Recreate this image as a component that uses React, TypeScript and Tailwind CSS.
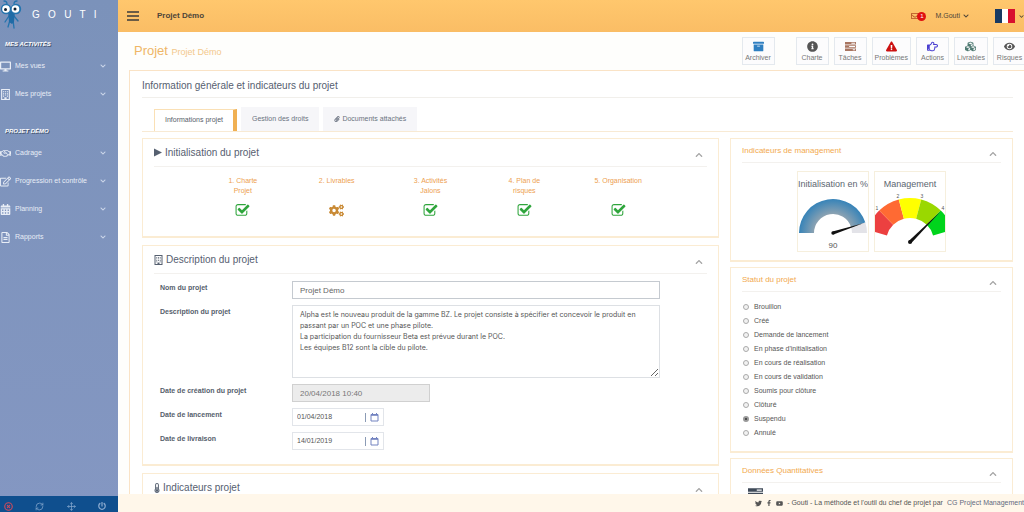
import React, { useState } from 'react';
import {
  FaArchive,
  FaCalendarAlt,
  FaChevronDown,
  FaChevronUp,
  FaCogs,
  FaCubes,
  FaDesktop,
  FaExclamationTriangle,
  FaEye,
  FaFacebookF,
  FaInfoCircle,
  FaPaperclip,
  FaPowerOff,
  FaRegEdit,
  FaRegEnvelope,
  FaRegFileAlt,
  FaRegHandPointRight,
  FaRegHandshake,
  FaThermometerHalf,
  FaTwitter,
  FaYoutube,
} from 'react-icons/fa';
import { CircleX, Move, RefreshCw } from 'lucide-react';

interface IconProps {
  className?: string;
}

function BuildingIcon({ className }: IconProps) {
  return (
    <svg viewBox="0 0 18 20" className={className} fill="currentColor" aria-hidden="true">
      <path d="M1 0h16v20H1zM3 2v16h4v-3h4v3h4V2z" fillRule="evenodd" />
      <path
        d="M4.5 4h2v1.6h-2zM8 4h2v1.6h-2zM11.5 4h2v1.6h-2zM4.5 7h2v1.6h-2zM8 7h2v1.6H8zM11.5 7h2v1.6h-2zM4.5 10h2v1.6h-2zM8 10h2v1.6H8zM11.5 10h2v1.6h-2zM4.5 13h2v1.6h-2zM11.5 13h2v1.6h-2z"
      />
    </svg>
  );
}

function TasksIcon({ className }: IconProps) {
  return (
    <svg viewBox="0 0 24 20" className={className} fill="currentColor" aria-hidden="true">
      <path
        fillRule="evenodd"
        d="M0 0h24v5.5H0zM14 1.8v2h8v-2zM0 7.2h24v5.5H0zM9 9v2h13V9zM0 14.5h24V20H0zM17 16.2v2h5v-2z"
      />
    </svg>
  );
}

function PlayIcon({ className }: IconProps) {
  return (
    <svg viewBox="0 0 8 8" className={className} fill="currentColor" aria-hidden="true">
      <path d="M0 0l8 4-8 4z" />
    </svg>
  );
}

function CalendarIcon({ className }: IconProps) {
  return (
    <svg viewBox="0 0 9 9" className={className} fill="none" stroke="currentColor" aria-hidden="true">
      <path d="M1 1.5h7v6.5H1z" />
      <path d="M1 2h7" strokeWidth="1.6" />
      <path d="M2.5 0v1M6.5 0v1" />
    </svg>
  );
}

const activities = [
  { label: 'Mes vues', icon: FaDesktop },
  { label: 'Mes projets', icon: BuildingIcon },
];

const projectMenu = [
  { label: 'Cadrage', icon: FaRegHandshake },
  { label: 'Progression et contrôle', icon: FaRegEdit },
  { label: 'Planning', icon: FaCalendarAlt },
  { label: 'Rapports', icon: FaRegFileAlt },
];

const actions = [
  { label: 'Charte', icon: FaInfoCircle, color: 'text-[#555]' },
  { label: 'Tâches', icon: TasksIcon, color: 'text-[#a87560]' },
  { label: 'Problèmes', icon: FaExclamationTriangle, color: 'text-[#cc1111]' },
  { label: 'Actions', icon: FaRegHandPointRight, color: 'text-[#4a3fd0]' },
  { label: 'Livrables', icon: FaCubes, color: 'text-[#4f7a72]' },
  { label: 'Risques', icon: FaEye, color: 'text-[#555]' },
];

const steps = [
  { lines: ['1. Charte', 'Projet'], done: true },
  { lines: ['2. Livrables'], done: false },
  { lines: ['3. Activités', 'Jalons'], done: true },
  { lines: ['4. Plan de', 'risques'], done: true },
  { lines: ['5. Organisation'], done: true },
];

const statuses = [
  'Brouillon',
  'Créé',
  'Demande de lancement',
  "En phase d'initialisation",
  'En cours de réalisation',
  'En cours de validation',
  'Soumis pour clôture',
  'Clôturé',
  'Suspendu',
  'Annulé',
];

const description = `Alpha est le nouveau produit de la gamme BZ. Le projet consiste à spécifier et concevoir le produit en passant par un POC et une phase pilote.
La participation du fournisseur Beta est prévue durant le POC.
Les équipes B12 sont la cible du pilote.`;

function Mascot() {
  return (
    <svg viewBox="0 0 22 30" className="h-[30px] w-[22px] shrink-0" aria-hidden="true">
      <g stroke="#2474ae" strokeWidth="1.3" fill="none" strokeLinecap="round">
        <path d="M7 4C7 2 6 1 4 1M14 4c0-2 1-3 3-3" />
        <path d="M9 16l-4 6M14 16l4 5M10 20l-2 7M13 20l1 8" />
      </g>
      <path d="M8 11h7l-1 11-2 2-3-2z" fill="#1f6ba6" />
      <circle cx="6" cy="9" r="5.2" fill="#2474ae" />
      <circle cx="16" cy="9" r="5.2" fill="#2474ae" />
      <circle cx="6" cy="9" r="3.8" fill="#fff" />
      <circle cx="15.5" cy="9" r="3.8" fill="#fff" />
      <circle cx="5.5" cy="9.5" r="1.5" fill="#123" />
      <circle cx="15" cy="9" r="1.5" fill="#123" />
    </svg>
  );
}

function CheckIcon() {
  return (
    <svg viewBox="0 0 1792 1792" className="h-[15px] w-[15px]" fill="#2fa53c" aria-hidden="true">
      <path d="M1472 930v318q0 119-84.5 203.5t-203.5 84.5h-832q-119 0-203.5-84.5t-84.5-203.5v-832q0-119 84.5-203.5t203.5-84.5h832q63 0 117 25 15 7 18 23 3 17-9 29l-49 49q-10 10-23 10-3 0-9-2-23-6-45-6h-832q-66 0-113 47t-47 113v832q0 66 47 113t113 47h832q66 0 113-47t47-113v-254q0-13 9-22l64-64q10-10 23-10 6 0 12 3 20 8 20 29zm231-489l-814 814q-24 24-57 24t-57-24l-430-430q-24-24-24-57t24-57l110-110q24-24 57-24t57 24l263 263 647-647q24-24 57-24t57 24l110 110q24 24 24 57t-24 57z" />
    </svg>
  );
}

// ring segment between two angles (degrees, counter-clockwise from the right)
function arc(cx: number, cy: number, r1: number, r2: number, from: number, to: number) {
  const pt = (r: number, a: number) => {
    const rad = (a * Math.PI) / 180;
    return `${(cx + r * Math.cos(rad)).toFixed(2)} ${(cy - r * Math.sin(rad)).toFixed(2)}`;
  };
  return `M${pt(r2, from)}A${r2} ${r2} 0 0 1 ${pt(r2, to)}L${pt(r1, to)}A${r1} ${r1} 0 0 0 ${pt(r1, from)}Z`;
}

function ProgressGauge() {
  return (
    <svg viewBox="0 0 70 60" className="block w-full" role="img" aria-label="90">
      <defs>
        <radialGradient id="blueRing" gradientUnits="userSpaceOnUse" cx="35" cy="42" r="34">
          <stop offset="0.55" stopColor="#8ea3b2" />
          <stop offset="1" stopColor="#3683b8" />
        </radialGradient>
      </defs>
      <path d={arc(35, 42, 19, 34, 180, 18)} fill="url(#blueRing)" />
      <path d={arc(35, 42, 19, 34, 18, 0)} fill="#e3e3e8" />
      <path d="M34.6 40.6L66 32L35.4 43.6Z" fill="#111" />
      <circle cx="35" cy="42" r="1.7" fill="#111" />
      <text x="35" y="57" textAnchor="middle" fontSize="8" fill="#555">90</text>
    </svg>
  );
}

function ManagementGauge() {
  const colors = ['#ec4040', '#ff6a33', '#ffff00', '#9ad800', '#00d41c'];
  return (
    <svg viewBox="0 0 70 60" className="block w-full" role="img" aria-label="Management">
      {colors.map((c, i) => (
        <path key={c} d={arc(35, 51, 24, 44, 164 - i * 29.6, 164 - (i + 1) * 29.6)} fill={c} />
      ))}
      <path d="M34 49.8L66 20L36.2 52.2Z" fill="#111" />
      <circle cx="35" cy="51" r="2" fill="#111" />
      <g fontSize="5" fill="#555" textAnchor="middle">
        <text x="2" y="19">1</text>
        <text x="23" y="7">2</text>
        <text x="47" y="7">3</text>
        <text x="68" y="19">4</text>
      </g>
    </svg>
  );
}

function NavGroup({ title, items }: { title: string; items: typeof activities }) {
  return (
    <section>
      <h3 className="pl-[5px] text-[6px] leading-[8px] font-bold italic text-white [text-shadow:1px_1px_0_#44536f]">
        {title}
      </h3>
      <ul className="pt-1">
        {items.map(({ label, icon: Icon }) => (
          <li key={label}>
            <a href="#" className="flex h-7 items-center pr-3 text-[7px] text-[#e8edf6]">
              <Icon className="h-[11px] w-[11px] shrink-0" />
              <span className="grow pl-1 whitespace-nowrap">{label}</span>
              <FaChevronDown className="h-[6px] w-[6px] shrink-0 text-[#cdd7ea]" />
            </a>
          </li>
        ))}
      </ul>
    </section>
  );
}

function Sidebar() {
  return (
    <aside className="flex w-[118px] shrink-0 flex-col bg-linear-to-b from-[#7b92ba] to-[#8497c2]">
      <div className="flex h-10 items-start">
        <Mascot />
        <span className="pt-2 pl-[10px] text-[10px] leading-[14px] whitespace-pre text-white">G   O   U   T   I</span>
      </div>
      <nav className="flex grow flex-col gap-[19px]">
        <NavGroup title="MES ACTIVITÉS" items={activities} />
        <NavGroup title="PROJET DÉMO" items={projectMenu} />
      </nav>
      <div className="flex h-4 items-center justify-between bg-[#0f4f8e] pt-1 pr-3 pl-1 text-[#86a7cd]">
        <button aria-label="Fermer" className="text-[#cf4a5c]"><CircleX size={9} strokeWidth={3} /></button>
        <button aria-label="Actualiser"><RefreshCw size={9} /></button>
        <button aria-label="Déplacer"><Move size={9} /></button>
        <button aria-label="Déconnexion"><FaPowerOff size={8} /></button>
      </div>
    </aside>
  );
}

function TopBar() {
  return (
    <header className="flex h-8 shrink-0 items-center bg-linear-to-b from-[#ffc76d] to-[#fabd65] pl-[9px] text-[#4d4538]">
      <button aria-label="Menu" className="flex w-3 flex-col gap-[2px]">
        <span className="h-[2px] bg-[#6b5c46]" />
        <span className="h-[2px] bg-[#6b5c46]" />
        <span className="h-[2px] bg-[#6b5c46]" />
      </button>
      <strong className="grow pl-[18px] text-[8px]">Projet Démo</strong>
      <button aria-label="Messages" className="flex items-center">
        <FaRegEnvelope className="h-[8px] w-[8px] text-[#b04d20]" />
        <span className="-ml-[2px] h-[9px] w-[9px] rounded-full bg-[#e01010] text-[6px] leading-[9px] text-white">1</span>
      </button>
      <button className="ml-[9px] flex items-center gap-[3px] text-[7px]">
        M.Gouti <FaChevronDown size={6} />
      </button>
      <button aria-label="Français" className="ml-[26px] flex items-center gap-1">
        <span className="flex h-[14px] w-5">
          <span className="grow bg-[#173a63]" />
          <span className="grow bg-white" />
          <span className="grow bg-[#d8102e]" />
        </span>
        <FaChevronDown size={5} />
      </button>
    </header>
  );
}

function ActionButton({ label, icon: Icon, color }: (typeof actions)[number]) {
  return (
    <button className="flex h-7 min-w-[33px] flex-col items-center justify-center gap-[2px] border border-[#e4e9ee] bg-[#fcfcfd] px-[2px] text-[7px] leading-[8px] text-[#777]">
      <Icon className={`h-[11px] w-[11px] ${color}`} />
      {label}
    </button>
  );
}

interface PanelProps {
  title: string;
  icon?: React.ReactNode;
  side?: boolean;
  children?: React.ReactNode;
}

function Panel({ title, icon, side, children }: PanelProps) {
  return (
    <section className="border border-b-2 border-[#fbecd3] bg-white">
      <div
        className={`mx-[11px] flex justify-between border-b border-[#f3f1ee] ${side ? 'h-6' : 'h-7'}`}
      >
        {side ? (
          <h3 className="pt-[6px] text-[8px] leading-[12px] text-[#f2a94e]">{title}</h3>
        ) : (
          <h2 className="flex items-center gap-[3px] text-[10px] text-[#566070]">
            {icon}
            {title}
          </h2>
        )}
        <button aria-label="Réduire" className={`pr-1 text-[#a5a5a5] ${side ? 'pt-[6px]' : 'pt-1'}`}>
          <FaChevronUp className="h-[8px] w-[8px]" />
        </button>
      </div>
      {children}
    </section>
  );
}

function Field({ id, label, children }: { id: string; label: string; children: React.ReactNode }) {
  return (
    <div className="grid grid-cols-4">
      <label htmlFor={id} className="pt-[2px] text-[7px] leading-[10px] font-bold text-[#56606c]">
        {label}
      </label>
      <div className="col-span-3 pr-7">{children}</div>
    </div>
  );
}

function DateInput({ id, value }: { id: string; value: string }) {
  return (
    <div className="flex h-[18px] w-[92px] items-center border border-[#e2e5ea] pr-1">
      <input id={id} defaultValue={value} className="w-0 grow pl-1 text-[7px] text-[#555] outline-none" />
      <button aria-label="Choisir une date" className="border-l border-[#8b9bb5] pl-1 text-[#7283c0]">
        <CalendarIcon className="h-[9px] w-[9px]" />
      </button>
    </div>
  );
}

function ProjectForm() {
  return (
    <form className="flex flex-col gap-[6px] pt-[7px] pr-[30px] pb-[14px] pl-[17px]">
      <Field id="name" label="Nom du projet">
        <input
          id="name"
          defaultValue="Projet Démo"
          className="block h-[18px] w-full border border-[#c5cad0] px-[7px] text-[8px] text-[#666]"
        />
      </Field>
      <Field id="description" label="Description du projet">
        <textarea
          id="description"
          defaultValue={description}
          className="block h-[73px] w-full border border-[#dde0e4] px-[7px] py-[3px] font-['Inter',sans-serif] text-[7px] leading-[11px] text-[#555]"
        />
      </Field>
      <Field id="created" label="Date de création du projet">
        <input
          id="created"
          disabled
          defaultValue="20/04/2018 10:40"
          className="block h-[18px] w-[138px] border border-[#d0d0d0] bg-[#ececec] px-[7px] text-[8px] text-[#777]"
        />
      </Field>
      <Field id="start" label="Date de lancement">
        <DateInput id="start" value="01/04/2018" />
      </Field>
      <Field id="end" label="Date de livraison">
        <DateInput id="end" value="14/01/2019" />
      </Field>
    </form>
  );
}

function GaugeCard({ title, children }: { title: string; children: React.ReactNode }) {
  return (
    <div className="w-[72px] overflow-hidden border border-[#f6efdd]">
      <h4 className="pt-[5px] text-center text-[9px] leading-[14px] whitespace-nowrap text-[#5c6670]">{title}</h4>
      {children}
    </div>
  );
}

export default function App() {
  const [status, setStatus] = useState('Suspendu');

  return (
    <div className="flex h-screen overflow-hidden bg-[#fefefc] font-['Liberation_Sans',Arial,sans-serif]">
      <Sidebar />
      <div className="flex min-w-0 grow flex-col">
        <TopBar />
        <main className="min-h-0 grow overflow-hidden pl-[11px]">
          <div className="-mr-[2px] flex h-[38px] items-center justify-between pl-[5px]">
            <h1 className="text-[13px] text-[#efb667]">
              Projet <small className="text-[9px] text-[#f3c88c]">Projet Démo</small>
            </h1>
            <div className="flex gap-[5px]">
              <div className="pr-4">
                <ActionButton label="Archiver" icon={FaArchive} color="text-[#2f7fc1]" />
              </div>
              {actions.map((a) => (
                <ActionButton key={a.label} {...a} />
              ))}
            </div>
          </div>

          <div className="border-t border-l border-[#fae3c6] bg-white pr-[11px] pl-3">
            <h2 className="h-[27px] border-b border-[#f1efeb] pt-2 text-[10px] leading-[13px] text-[#566070]">
              Information générale et indicateurs du projet
            </h2>

            <div className="flex items-end gap-1 border-b border-[#f8ead4] px-3 pt-[9px] text-[7px] text-[#6a7280]">
              <button className="h-[22px] border border-r-4 border-b-0 border-[#fae0b5] border-r-[#f0b053] px-[10px] text-[#565e6a]">
                Informations projet
              </button>
              <button className="h-6 bg-[#f6f6f9] px-[11px]">Gestion des droits</button>
              <button className="flex h-6 items-center gap-[2px] bg-[#f6f6f9] px-[11px]">
                <FaPaperclip size={6} /> Documents attachés
              </button>
            </div>

            <div className="grid grid-cols-[577fr_283fr] gap-[11px] pt-[6px]">
              <div className="flex flex-col gap-[7px]">
                <Panel title="Initialisation du projet" icon={<PlayIcon className="h-[9px] w-2" />}>
                  <div className="grid h-[69px] grid-cols-12 px-[6px] pt-[9px]">
                    {steps.map((s) => (
                      <a
                        href="#"
                        key={s.lines[0]}
                        className="col-span-2 flex flex-col items-center text-center text-[7px] leading-[10px] text-[#eda050] first:col-start-2"
                      >
                        <span className="h-[27px]">
                          {s.lines.map((l) => (
                            <span key={l} className="block">{l}</span>
                          ))}
                        </span>
                        {s.done ? <CheckIcon /> : <FaCogs className="h-[15px] w-[15px] text-[#c98a35]" />}
                      </a>
                    ))}
                  </div>
                </Panel>
                <Panel title="Description du projet" icon={<BuildingIcon className="h-[10px] w-[9px]" />}>
                  <ProjectForm />
                </Panel>
                <Panel title="Indicateurs projet" icon={<FaThermometerHalf className="h-[10px] w-[6px]" />}>
                  <div className="h-20" />
                </Panel>
              </div>

              <div className="flex flex-col gap-[5px]">
                <Panel side title="Indicateurs de management">
                  <div className="flex justify-center gap-[5px] pt-2 pb-[8px]">
                    <GaugeCard title="Initialisation en %">
                      <ProgressGauge />
                    </GaugeCard>
                    <GaugeCard title="Management">
                      <ManagementGauge />
                    </GaugeCard>
                  </div>
                </Panel>
                <Panel side title="Statut du projet">
                  <fieldset className="px-3 pt-2 pb-[11px]">
                    {statuses.map((s) => (
                      <label key={s} className="flex h-[14px] items-center gap-[5px] text-[7px] text-[#555]">
                        <input
                          type="radio"
                          name="status"
                          checked={status === s}
                          onChange={() => setStatus(s)}
                          className="h-[6px] w-[6px] appearance-none rounded-full border border-[#aaa] bg-[#f2f2f2] checked:border-2 checked:border-[#999] checked:bg-[#333]"
                        />
                        {s}
                      </label>
                    ))}
                  </fieldset>
                </Panel>
                <Panel side title="Données Quantitatives">
                  <div className="h-20 px-[17px] pt-[5px] text-[#3f4a58]">
                    <TasksIcon className="h-[13px] w-[15px]" />
                  </div>
                </Panel>
              </div>
            </div>
          </div>
        </main>
        <footer className="flex h-[18px] shrink-0 items-center justify-end gap-1 bg-[#fff7ea] text-[7px] whitespace-nowrap text-[#555]">
          <a href="#" aria-label="Twitter"><FaTwitter size={7} /></a>
          <a href="#" aria-label="Facebook"><FaFacebookF size={6} /></a>
          <a href="#" aria-label="YouTube"><FaYoutube size={7} /></a>
          <span>- Gouti - La méthode et l'outil du chef de projet par</span>
          <a href="#" className="text-[#5f6a80]">CG Project Management</a>
        </footer>
      </div>
    </div>
  );
}
